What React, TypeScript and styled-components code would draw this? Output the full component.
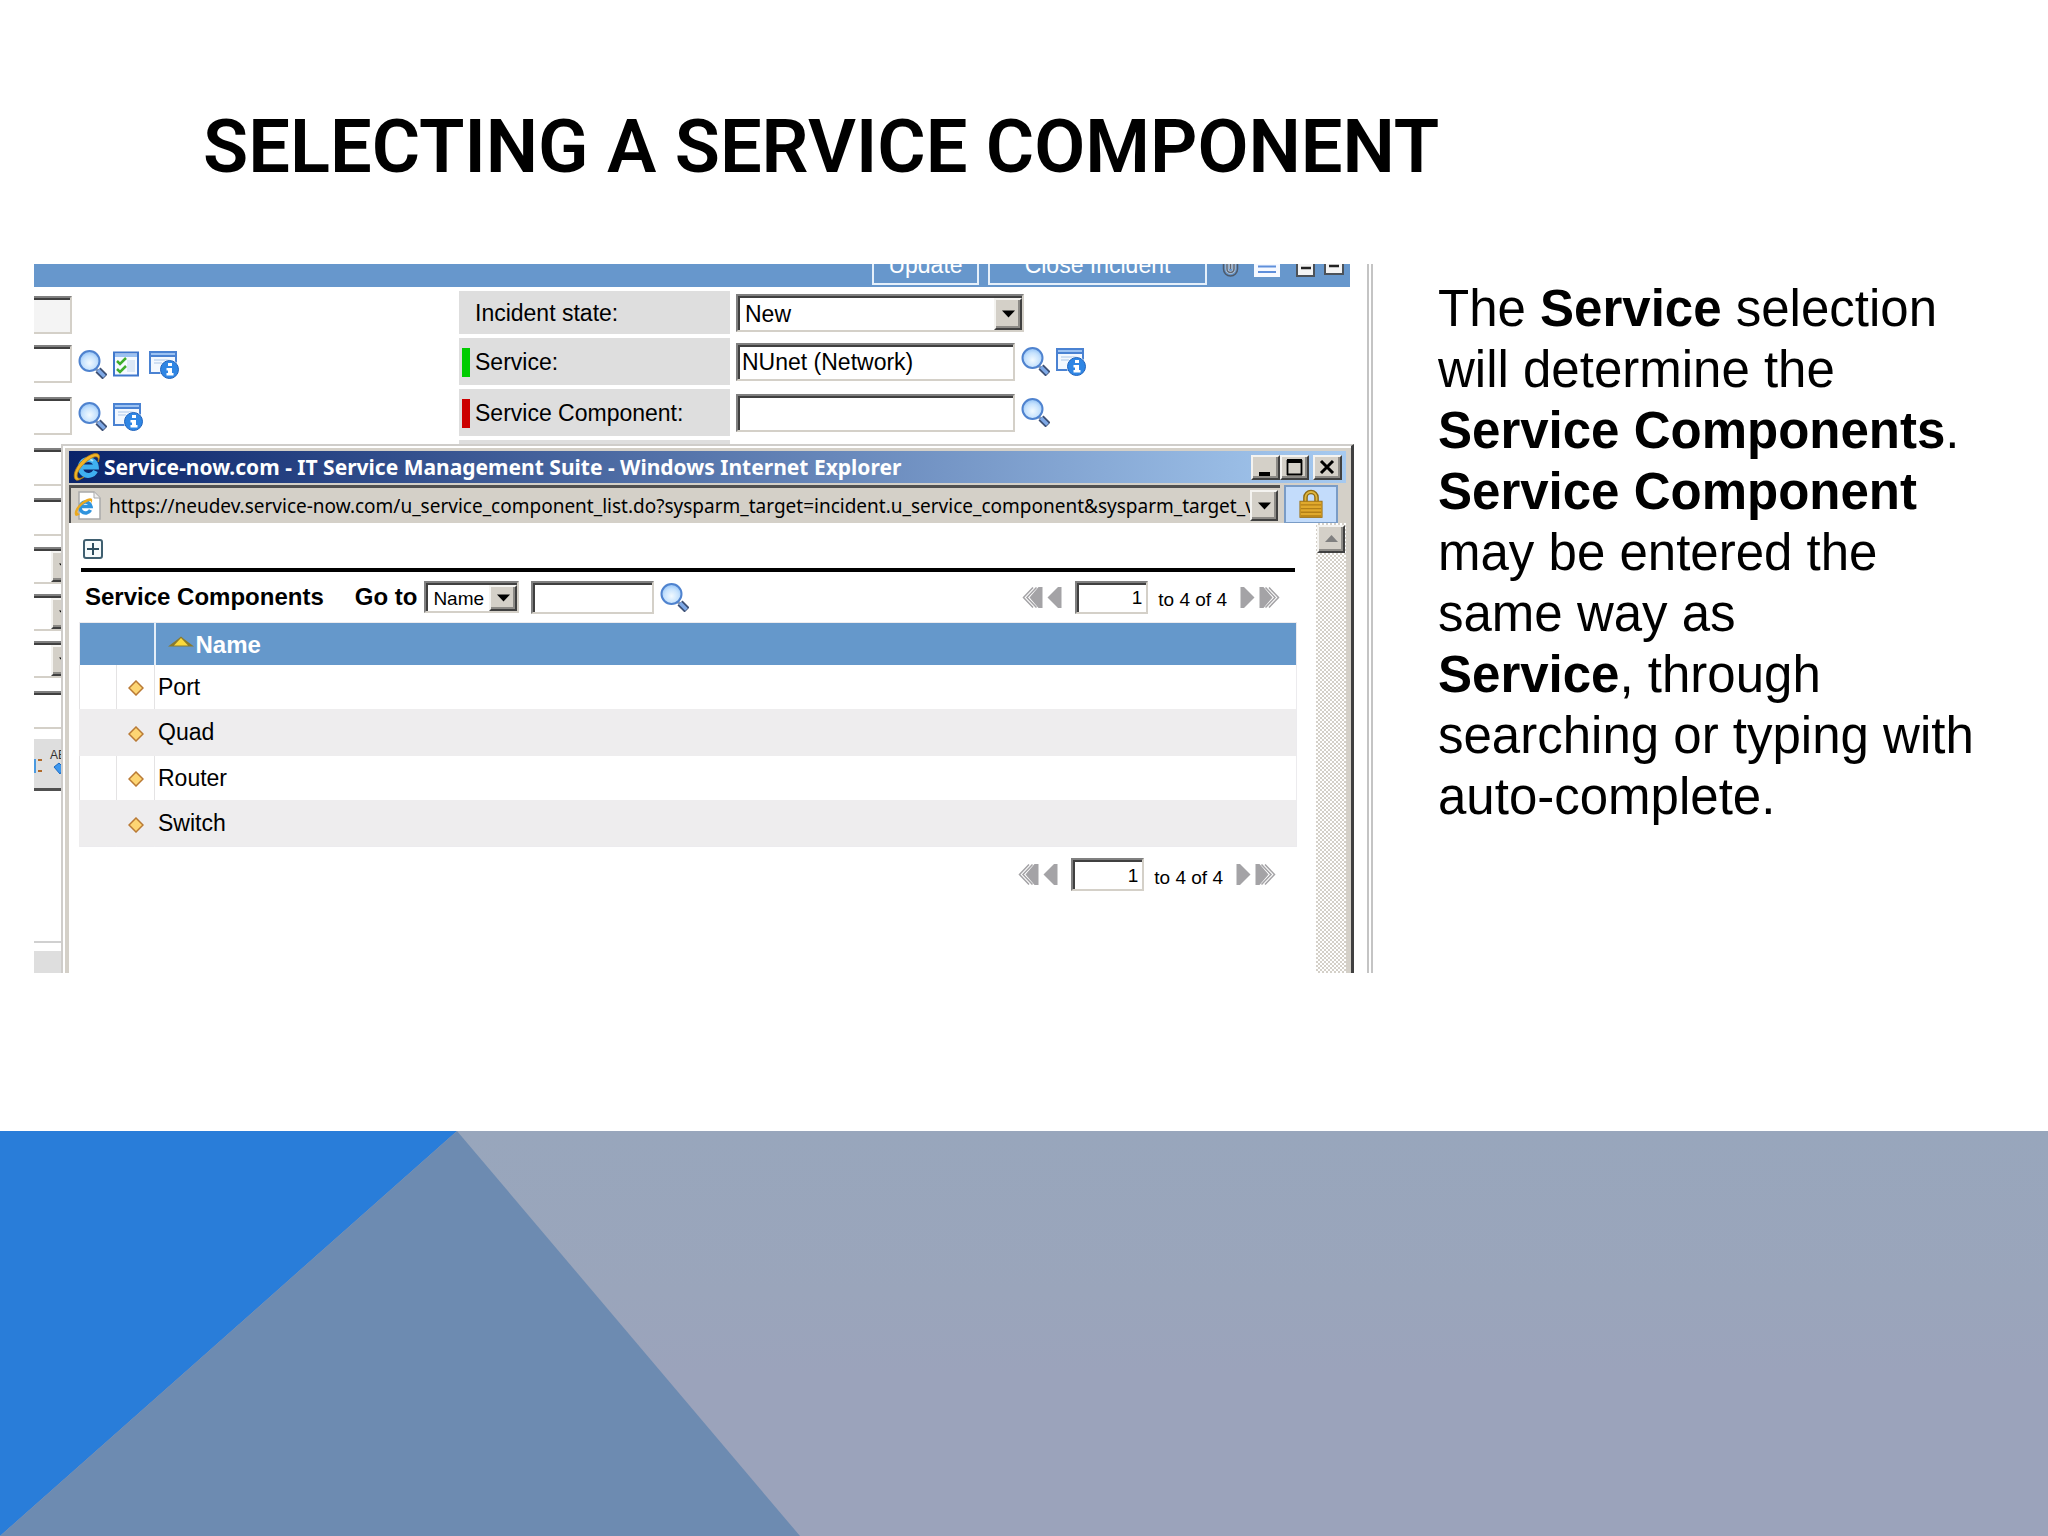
import React from "react";
import styled, { createGlobalStyle, css } from "styled-components";

const sans = '"Liberation Sans", Arial, Helvetica, sans-serif';
const ui = '"Noto Sans", Tahoma, sans-serif';

const GlobalStyle = createGlobalStyle`
  *, *::before, *::after { box-sizing: border-box; }
  body { margin: 0; background: #ffffff; color: #000000; font-family: ${sans}; }
  button, input, select { font: inherit; color: inherit; margin: 0; }
`;

const inset = css`
  border: 2px solid;
  border-color: #808080 #d4d0c8 #d4d0c8 #808080;
  box-shadow: inset 2px 2px #404040;
  background: #ffffff;
`;

const bevel = css`
  border: 2px solid;
  border-color: #f4f3f0 #404040 #404040 #f4f3f0;
  box-shadow: inset -2px -2px #8c8a86;
  background: #d4d0c8;
`;

const Slide = styled.main`
  min-height: 100vh;
  display: flex;
  flex-direction: column;
`;

const Title = styled.h1`
  margin: 0;
  padding: 101px 40px 71px 203px;
  font: 600 74px/92px Roboto, sans-serif;
  text-transform: uppercase;
`;

const Content = styled.div`
  display: grid;
  grid-template-columns: minmax(0, 1339fr) minmax(0, 610fr);
  gap: 65px;
  padding-left: 34px;
`;

const Description = styled.p`
  margin: 0;
  padding: 14px 65px 0 0;
  font-size: 51px;
  line-height: 61px;
`;

const Artwork = styled.svg`
  display: block;
  width: 100%;
  height: 405px;
  margin-top: auto;
`;

/* ---------- incident form behind the pop-up ---------- */

const Shot = styled.section`
  position: relative;
  overflow: hidden;
  border-right: 6px double #c4c4c4;
  font-size: 23px;
`;

const ActionBar = styled.div`
  display: flex;
  justify-content: flex-end;
  align-items: flex-end;
  gap: 9px;
  height: 23px;
  margin-right: 17px;
  padding: 0 6px 2px 0;
  background: #6797cc;
`;

const ActionButton = styled.button<{ $wide?: boolean }>`
  flex: none;
  width: ${(p) => (p.$wide ? 219 : 107)}px;
  height: 42px;
  padding: 2px 0 0;
  border: 2px solid #e6f0fa;
  background: #6797cc;
  color: #ffffff;
  line-height: 36px;
`;

const ActionIcons = styled.div`
  display: flex;
  align-items: flex-end;
  gap: 15px;
  padding: 0 0 8px 6px;
  svg { display: block; }
`;

const Form = styled.div`
  display: grid;
  grid-template-columns: 425px minmax(0, 1fr);
  padding-top: 4px;
`;

const SideColumn = styled.div`
  display: flex;
  flex-direction: column;
  gap: 4px;
`;

const FieldColumn = styled.div`
  display: flex;
  flex-direction: column;
  gap: 4px;
`;

const SideRow = styled.div<{ $h: number }>`
  display: flex;
  align-items: center;
  gap: 6px;
  height: ${(p) => p.$h}px;
  padding-top: 4px;
`;

const SideInput = styled.input<{ $muted?: boolean }>`
  width: 38px;
  height: 38px;
  ${inset}
  border-left: 0;
  box-shadow: inset 0 2px #404040;
  background: ${(p) => (p.$muted ? "#f4f4f4" : "#ffffff")};
`;

const SideNotes = styled.div`
  width: 60px;
  height: 38px;
  margin-top: 8px;
  ${inset}
  border-left: 0;
  box-shadow: inset 0 2px #404040;
`;

const SideTools = styled.div`
  display: flex;
  justify-content: flex-start;
  width: 60px;
  height: 52px;
  margin-top: 6px;
  border-bottom: 3px solid #505050;
  background: #dedede;
`;

const SideArea = styled.div`
  width: 60px;
  height: 148px;
  border-bottom: 2px solid #d0d0d0;
`;

const SideFoot = styled.div`
  width: 60px;
  height: 22px;
  margin-top: 4px;
  background: #dedede;
`;

const FieldRow = styled.div<{ $h: number }>`
  display: grid;
  grid-template-columns: 271px minmax(0, 1fr);
  gap: 6px;
  align-items: center;
  height: ${(p) => p.$h}px;
`;

const FieldLabel = styled.label<{ $flag?: string }>`
  display: flex;
  align-items: center;
  gap: 5px;
  height: 100%;
  padding: 2px 0 0 3px;
  background: #dedede;
  &::before {
    content: "";
    width: 8px;
    height: 29px;
    background: ${(p) => p.$flag || "transparent"};
  }
`;

const FieldControl = styled.div`
  display: flex;
  align-items: center;
  gap: 6px;
`;

const TextField = styled.input<{ $w: number; $h?: number; $size?: number; $right?: boolean }>`
  width: ${(p) => p.$w}px;
  height: ${(p) => p.$h || 38}px;
  padding: 2px 4px 0;
  ${inset}
  font-size: ${(p) => p.$size || 23}px;
  text-align: ${(p) => (p.$right ? "right" : "left")};
`;

const SelectBox = styled.span<{ $w: number; $h: number; $open?: boolean }>`
  display: grid;
  grid-template-columns: minmax(0, 1fr) 28px;
  width: ${(p) => p.$w}px;
  height: ${(p) => p.$h}px;
  ${inset}
  padding: 2px 0 0 2px;
  overflow: hidden;
  ${(p) => p.$open && css`
    border-left: 0;
    box-shadow: inset 0 2px #404040;
  `}
`;

const Select = styled.select<{ $size?: number }>`
  grid-area: 1 / 1 / 2 / 3;
  appearance: none;
  min-width: 0;
  padding: 0 0 0 5px;
  border: 0;
  background: transparent;
  font-size: ${(p) => p.$size || 23}px;
`;

const SelectArrow = styled.span`
  grid-area: 1 / 2;
  display: grid;
  place-items: center;
  pointer-events: none;
  ${bevel}
`;

const IconButton = styled.button`
  display: block;
  flex: none;
  padding: 0;
  border: 0;
  background: none;
  svg { display: block; }
`;

/* ---------- pop-up browser window ---------- */

const Popup = styled.section`
  position: absolute;
  inset: 180px 13px 0 27px;
  display: flex;
  flex-direction: column;
  padding: 5px 5px 0 6px;
  border: solid;
  border-width: 2px 3px 0 2px;
  border-color: #cfcdca #404040 #cfcdca #cfcdca;
  box-shadow: inset 2px 2px #ffffff;
  background: #d4d0c8;
`;

const TitleBar = styled.header`
  display: flex;
  align-items: center;
  height: 32px;
  padding: 0 4px;
  background: linear-gradient(90deg, #0a246a, #a6caf0);
  color: #ffffff;
`;

const WindowTitle = styled.h2`
  flex: 1;
  min-width: 0;
  margin: 0;
  padding-left: 3px;
  overflow: hidden;
  white-space: nowrap;
  font: 700 21px/28px ${ui};
`;

const WindowButton = styled.button<{ $apart?: boolean }>`
  display: grid;
  place-items: center;
  width: 29px;
  height: 25px;
  margin-left: ${(p) => (p.$apart ? 4 : 0)}px;
  padding: 0;
  ${bevel}
`;

const AddressRow = styled.div`
  display: flex;
  align-items: center;
  gap: 4px;
  height: 40px;
  padding-top: 2px;
`;

const AddressBox = styled.div`
  display: flex;
  align-items: center;
  flex: 1;
  min-width: 0;
  height: 38px;
  padding: 2px 2px 2px 3px;
  border-top: 3px solid #505050;
  border-left: 2px solid #505050;
`;

const AddressInput = styled.input`
  flex: 1;
  min-width: 0;
  height: 32px;
  padding: 0 0 0 8px;
  border: 0;
  background: transparent;
  font: 400 19px/30px ${ui};
`;

const DropButton = styled.button`
  display: grid;
  place-items: center;
  width: 28px;
  height: 31px;
  padding: 0;
  ${bevel}
`;

const LockButton = styled.button`
  display: grid;
  place-items: center;
  width: 54px;
  height: 39px;
  margin-right: 8px;
  padding: 0;
  border: 2px solid #7a9cc6;
  background: #c3dcfb;
`;

const Viewport = styled.div`
  display: flex;
  flex: 1;
  min-height: 0;
`;

const Page = styled.div`
  flex: 1;
  min-width: 0;
  padding: 16px 19px 0 10px;
  background: #ffffff;
`;

const PageHead = styled.div`
  margin: 0 2px;
  padding: 0 0 9px 2px;
  border-bottom: 4px solid #000000;
`;

const ListBar = styled.div`
  display: flex;
  align-items: center;
  height: 50px;
  padding: 0 17px 0 6px;
`;

const ListTitle = styled.h3`
  margin: 0 31px 0 0;
  font-size: 24px;
  line-height: 28px;
`;

const GoTo = styled.label`
  margin-right: 7px;
  font-size: 24px;
  font-weight: 700;
  line-height: 28px;
`;

const SearchGroup = styled.div`
  display: flex;
  align-items: center;
  gap: 6px;
  margin-left: 12px;
`;

const Pager = styled.nav`
  display: flex;
  align-items: center;
  gap: 4px;
  margin-left: auto;
  font-size: 19px;
`;

const PagerField = styled.label`
  display: flex;
  align-items: center;
  gap: 10px;
  margin: 0 9px;
  line-height: 24px;
  white-space: nowrap;
`;

const PagerText = styled.span`
  padding-top: 6px;
`;

const ListFoot = styled.div`
  display: flex;
  padding: 11px 21px 0 0;
`;

const Table = styled.table`
  width: 100%;
  border-collapse: collapse;
  table-layout: fixed;
  border: 1px solid #ecebee;
`;

const Column = styled.col<{ $w?: number }>`
  width: ${(p) => (p.$w ? p.$w + "px" : "auto")};
`;

const HeadCell = styled.th`
  height: 42px;
  padding: 0 0 0 12px;
  background: #6598cb;
  color: #ffffff;
  font-size: 24px;
  line-height: 28px;
  text-align: left;
  & + & { border-left: 2px solid #e4eef8; }
`;

const SortLabel = styled.span`
  display: flex;
  align-items: center;
  gap: 2px;
  padding-top: 2px;
  svg { margin-bottom: 6px; }
`;

const BodyRow = styled.tr<{ $shade: boolean }>`
  height: ${(p) => (p.$shade ? 47 : 44)}px;
  background: ${(p) => (p.$shade ? "#eeedee" : "#ffffff")};
  td { border-left: 1px solid ${(p) => (p.$shade ? "#eeedee" : "#e4e3e4")}; }
`;

const Cell = styled.td<{ $center?: boolean }>`
  padding: 0 0 0 ${(p) => (p.$center ? 0 : 3)}px;
  text-align: ${(p) => (p.$center ? "center" : "left")};
  font-size: 23px;
  line-height: 28px;
  svg { display: inline-block; vertical-align: middle; }
`;

const ScrollBar = styled.div`
  width: 30px;
  padding: 2px 1px;
  background: repeating-conic-gradient(#d4d0c8 0 25%, #ffffff 0 50%) 0 0 / 4px 4px;
`;

const ScrollUp = styled.button`
  display: grid;
  place-items: center;
  width: 28px;
  height: 28px;
  padding: 0;
  ${bevel}
`;

/* ---------- icons ---------- */

const Magnifier = () => (
  <svg width="29" height="29" viewBox="0 0 29 29" aria-hidden="true">
    <defs>
      <radialGradient id="glass" cx="50%" cy="60%" r="60%">
        <stop offset="0" stopColor="#f2faff" />
        <stop offset="0.6" stopColor="#c6e2fd" />
        <stop offset="1" stopColor="#8fc0f5" />
      </radialGradient>
    </defs>
    <path d="M17 18 L21 22" stroke="#8a9ab5" strokeWidth="3" />
    <path d="M20 20 L27 27" stroke="#3c4f74" strokeWidth="7" />
    <path d="M20 20 L26.5 26.5" stroke="#7fa9e6" strokeWidth="3.5" />
    <circle cx="11.5" cy="11" r="10" fill="url(#glass)" stroke="#4f83cf" strokeWidth="2" />
  </svg>
);

const InfoWindow = () => (
  <svg width="30" height="29" viewBox="0 0 30 29" aria-hidden="true">
    <rect x="1" y="2" width="26" height="21" fill="#f3f8fe" stroke="#4a82d2" strokeWidth="2" />
    <rect x="1" y="2" width="26" height="4" fill="#9cc2f2" stroke="#4a82d2" strokeWidth="2" />
    <path d="M5 10h16M5 13h8" stroke="#cfdff3" strokeWidth="2" />
    <circle cx="20.5" cy="19.500" r="10" fill="#ffffff" />
    <circle cx="20.500" cy="19.500" r="9" fill="#2f86e4" stroke="#1f63bd" />
    <path d="M19 13h4v3h-4zM17.500 18H23v5h1.500v2.500h-7V23H19v-2.500h-1.500z" fill="#ffffff" />
  </svg>
);

const CheckWindow = () => (
  <svg width="30" height="26" viewBox="0 0 30 26" aria-hidden="true">
    <rect x="1" y="1.500" width="24" height="23" fill="#f6faff" stroke="#3f77cc" strokeWidth="2" />
    <path d="M2 4.500h22" stroke="#9cc2f2" strokeWidth="3" />
    <rect x="14" y="9" width="8" height="12" fill="#dce8f6" />
    <path d="M4 10l3 3 6-6M4 18l3 3 6-6" fill="none" stroke="#3fae2c" strokeWidth="2.500" />
  </svg>
);

const Triangle = ({ up, fill = "#000000" }: { up?: boolean; fill?: string }) => (
  <svg width="13" height="8" viewBox="0 0 13 8" aria-hidden="true">
    <path d={up ? "M6.500 0L13 7H0z" : "M0 0.500H13L6.500 7.500z"} fill={fill} />
  </svg>
);

const Explorer = ({ size }: { size: number }) => (
  <svg width={size} height={size} viewBox="0 0 28 28" aria-hidden="true">
    <path
      d="M22.500 18a8 8 0 1 1 .8-4H9"
      fill="none"
      stroke="#3fb0f0"
      strokeWidth="5"
    />
    <path d="M9 8.500a8 8 0 0 1 11-.5" fill="none" stroke="#a6e2fb" strokeWidth="2" />
    <path
      d="M3 27C-3 22 7 5 20 1c8-2 7 4 5 8 1-4 0-6-4-5C11 8 1 21 5 25c1 1 4 0 6-1-3 2-6 4-8 3z"
      fill="#f0b428"
      stroke="#b97f12"
      strokeWidth="0.800"
    />
  </svg>
);

const PageExplorer = () => (
  <svg width="27" height="29" viewBox="0 0 27 29" aria-hidden="true">
    <path d="M5 1h15l6 6v21H5z" fill="#ffffff" stroke="#a9a9a9" strokeWidth="1.500" />
    <path d="M20 1v6h6" fill="#eeeeee" stroke="#a9a9a9" />
    <path d="M16.500 19a5.500 5.500 0 1 1 .5-3.500H7" fill="none" stroke="#2f93dd" strokeWidth="3.500" />
    <path d="M2 25c-4-3 2-13 11-17 6-2 6 1 4 5 1-3-1-4-4-2C6 14 0 23 6 23c-1 1-3 2-4 2z" fill="#eba91f" />
  </svg>
);

const Lock = () => (
  <svg width="24" height="30" viewBox="0 0 26 31" aria-hidden="true">
    <path d="M7 15V8.500a6 6 0 0 1 12 0V15" fill="none" stroke="#8d6a14" strokeWidth="5" />
    <path d="M7 15V8.500a6 6 0 0 1 12 0V15" fill="none" stroke="#e0b73f" strokeWidth="2" />
    <rect x="1" y="12.500" width="24" height="17.500" fill="#e0a92c" stroke="#9c7013" />
    <path d="M2 16.500h22M2 20.500h22M2 24.500h22M2 28.500h22" stroke="#b27f16" strokeWidth="1.500" />
  </svg>
);

const Rewind = ({ flip, double }: { flip?: boolean; double?: boolean }) => (
  <svg width={double ? 21 : 15} height="21" viewBox={double ? "0 0 21 21" : "0 0 15 21"} aria-hidden="true">
    <g transform={flip ? `translate(${double ? 21 : 15} 0) scale(-1 1)` : undefined}>
      {double ? (
        <>
          <path d="M11 0.500L1.500 10.500l9.500 10M14.500 0.500L5 10.500l9.500 10" fill="none" stroke="#a4a3a6" strokeWidth="1.500" />
          <path d="M20.500 0v21h-4L7.500 10.500L16.500 0z" fill="#a4a3a6" />
        </>
      ) : (
        <path d="M14.500 0v21H11L0.500 10.500L11 0z" fill="#a4a3a6" />
      )}
    </g>
  </svg>
);

const Diamond = () => (
  <svg width="16" height="16" viewBox="0 0 16 16" aria-hidden="true">
    <path d="M8 1L15 8L8 15L1 8z" fill="#fdd573" stroke="#b97a35" strokeWidth="1.500" />
  </svg>
);

const Spelling = () => (
  <svg width="27" height="48" viewBox="0 0 27 48" aria-hidden="true">
    <path d="M0 20h2v14H0z" fill="#4a9ae0" />
    <path d="M4 21h4M4 32h4" stroke="#b06a2a" strokeWidth="2" />
    <text x="16" y="20" fontSize="12" fontFamily="Liberation Sans" fill="#333333">AB</text>
    <path d="M20 28l5-4 5 5-4 6z" fill="#3d97ee" stroke="#1b6cc4" />
  </svg>
);

const Search = () => (
  <IconButton type="button" aria-label="Look up"><Magnifier /></IconButton>
);
const Info = () => (
  <IconButton type="button" aria-label="Details"><InfoWindow /></IconButton>
);

const PageControls = ({ id }: { id: string }) => (
  <Pager aria-label="Pages">
    <IconButton type="button" aria-label="First"><Rewind double /></IconButton>
    <IconButton type="button" aria-label="Previous"><Rewind /></IconButton>
    <PagerField htmlFor={id}>
      <TextField id={id} $w={73} $h={33} $size={19} $right defaultValue="1" />
      <PagerText>to 4 of 4</PagerText>
    </PagerField>
    <IconButton type="button" aria-label="Next"><Rewind flip /></IconButton>
    <IconButton type="button" aria-label="Last"><Rewind flip double /></IconButton>
  </Pager>
);

const components = ["Port", "Quad", "Router", "Switch"];

const BackgroundForm = () => (
  <>
    <ActionBar>
      <ActionButton type="button">Update</ActionButton>
      <ActionButton type="button" $wide>Close Incident</ActionButton>
      <ActionIcons>
        <svg width="17" height="30" viewBox="0 0 17 30" aria-hidden="true">
          <path d="M1.500 4v18a7 7 0 0 0 14 0V6" fill="none" stroke="#4d5a6b" strokeWidth="1.500" />
          <path d="M5 8v14a3.500 3.500 0 0 0 7 0V8M8.500 8v14" fill="none" stroke="#c3ccd8" strokeWidth="3" />
          <path d="M5 8v14a3.500 3.500 0 0 0 7 0V8M8.500 8v14" fill="none" stroke="#5c6675" strokeWidth="1.500" />
        </svg>
        <svg width="26" height="26" viewBox="0 0 26 26" aria-hidden="true">
          <path d="M0 0h26v26H0z" fill="#f6f9ff" />
          <path d="M4 10h18M4 15.500h18M4 21h18" stroke="#5f8fdb" strokeWidth="2" />
        </svg>
        <svg width="49" height="26" viewBox="0 0 49 26" aria-hidden="true">
          <path d="M2 0h17v25H2zM30 0h18v23H30z" fill="#f4f4f4" stroke="#4c5259" strokeWidth="2" />
          <path d="M6 17h10M34 15h10" stroke="#222222" strokeWidth="2.500" />
        </svg>
      </ActionIcons>
    </ActionBar>
    <Form>
      <SideColumn>
        <SideRow $h={43}><SideInput $muted readOnly aria-label="Number" /></SideRow>
        <SideRow $h={48}>
          <SideInput aria-label="Caller" />
          <Search />
          <IconButton type="button" aria-label="Checklist"><CheckWindow /></IconButton>
          <Info />
        </SideRow>
        <SideRow $h={48}><SideInput aria-label="Location" /><Search /><Info /></SideRow>
        <SideRow $h={46}><SideInput aria-label="Phone" /></SideRow>
        <SideRow $h={46}><SideInput aria-label="Email" /></SideRow>
        {["Impact", "Urgency", "Priority"].map((name) => (
          <SideRow $h={43} key={name}>
            <SelectBox $w={47} $h={37} $open>
              <Select aria-label={name} />
              <SelectArrow><Triangle /></SelectArrow>
            </SelectBox>
          </SideRow>
        ))}
        <SideNotes />
        <SideTools><Spelling /></SideTools>
        <SideArea />
        <SideFoot />
      </SideColumn>
      <FieldColumn>
        <FieldRow $h={43}>
          <FieldLabel htmlFor="state">Incident state:</FieldLabel>
          <FieldControl>
            <SelectBox $w={288} $h={38}>
              <Select id="state"><option>New</option></Select>
              <SelectArrow><Triangle /></SelectArrow>
            </SelectBox>
          </FieldControl>
        </FieldRow>
        <FieldRow $h={47}>
          <FieldLabel htmlFor="service" $flag="#00cc00">Service:</FieldLabel>
          <FieldControl>
            <TextField id="service" $w={279} defaultValue="NUnet (Network)" />
            <Search /><Info />
          </FieldControl>
        </FieldRow>
        <FieldRow $h={47}>
          <FieldLabel htmlFor="component" $flag="#cc0000">Service Component:</FieldLabel>
          <FieldControl>
            <TextField id="component" $w={279} />
            <Search />
          </FieldControl>
        </FieldRow>
        <FieldRow $h={47}><FieldLabel as="span" /></FieldRow>
      </FieldColumn>
    </Form>
  </>
);

const LookupWindow = () => (
  <Popup>
    <TitleBar>
      <Explorer size={28} />
      <WindowTitle>Service-now.com - IT Service Management Suite - Windows Internet Explorer</WindowTitle>
      <WindowButton type="button" aria-label="Minimize">
        <svg width="17" height="17" viewBox="0 0 17 17"><path d="M2 13h11v4H2z" /></svg>
      </WindowButton>
      <WindowButton type="button" aria-label="Maximize">
        <svg width="17" height="17" viewBox="0 0 17 17">
          <path d="M1 2h15M1.500 1v15M15.500 1v15M1 15.500h15" stroke="#000000" strokeWidth="1.800" />
          <path d="M1 0h15v4H1z" />
        </svg>
      </WindowButton>
      <WindowButton type="button" aria-label="Close" $apart>
        <svg width="17" height="17" viewBox="0 0 17 17">
          <path d="M2 2l12 12M14 2L2 14" stroke="#000000" strokeWidth="3" />
        </svg>
      </WindowButton>
    </TitleBar>
    <AddressRow>
      <AddressBox>
        <PageExplorer />
        <AddressInput
          aria-label="Address"
          readOnly
          value="https://neudev.service-now.com/u_service_component_list.do?sysparm_target=incident.u_service_component&sysparm_target_value="
        />
        <DropButton type="button" aria-label="Address history"><Triangle /></DropButton>
      </AddressBox>
      <LockButton type="button" aria-label="Security report"><Lock /></LockButton>
    </AddressRow>
    <Viewport>
      <Page>
        <PageHead>
          <IconButton type="button" aria-label="Expand filter">
            <svg width="20" height="20" viewBox="0 0 20 20">
              <rect x="1" y="1" width="18" height="18" rx="2" fill="#f7fbfc" stroke="#3f5f70" strokeWidth="2" />
              <path d="M10 4v12M4 10h12" stroke="#2f4f60" strokeWidth="2" />
            </svg>
          </IconButton>
        </PageHead>
        <ListBar>
          <ListTitle>Service Components</ListTitle>
          <GoTo htmlFor="goto">Go to</GoTo>
          <SelectBox $w={95} $h={32}>
            <Select id="goto" $size={19}><option>Name</option></Select>
            <SelectArrow><Triangle /></SelectArrow>
          </SelectBox>
          <SearchGroup>
            <TextField $w={123} $h={33} $size={19} aria-label="Search text" />
            <Search />
          </SearchGroup>
          <PageControls id="page-top" />
        </ListBar>
        <Table>
          <colgroup>
            <Column $w={37} />
            <Column $w={38} />
            <Column />
          </colgroup>
          <thead>
            <tr>
              <HeadCell colSpan={2} />
              <HeadCell>
                <SortLabel>
                  <svg width="26" height="11" viewBox="0 0 26 11" aria-hidden="true">
                    <path d="M0 10.500L10 3l3-2.500L16 3l10 7.500z" fill="#8a7a2c" />
                    <path d="M6 9.500L13 2l7 7.500z" fill="#fbd93c" />
                  </svg>
                  Name
                </SortLabel>
              </HeadCell>
            </tr>
          </thead>
          <tbody>
            {components.map((name, i) => (
              <BodyRow key={name} $shade={i % 2 === 1}>
                <Cell $center />
                <Cell $center><Diamond /></Cell>
                <Cell>{name}</Cell>
              </BodyRow>
            ))}
          </tbody>
        </Table>
        <ListFoot><PageControls id="page-bottom" /></ListFoot>
      </Page>
      <ScrollBar>
        <ScrollUp type="button" aria-label="Scroll up"><Triangle up fill="#808080" /></ScrollUp>
      </ScrollBar>
    </Viewport>
  </Popup>
);

export default function App() {
  return (
    <>
      <GlobalStyle />
      <Slide>
        <Title>Selecting a Service Component</Title>
        <Content>
          <Shot>
            <BackgroundForm />
            <LookupWindow />
          </Shot>
          <Description>
            The <b>Service</b> selection will determine the <b>Service Components</b>.{" "}
            <b>Service Component</b> may be entered the same way as
            <br />
            <b>Service</b>, through searching or typing with auto-complete.
          </Description>
        </Content>
        <Artwork viewBox="0 0 2048 405" preserveAspectRatio="none" aria-hidden="true">
          <defs>
            <linearGradient id="haze" x1="0" y1="0" x2="0" y2="1">
              <stop offset="0" stopColor="#98a6bc" />
              <stop offset="0.400" stopColor="#9aa5bb" />
              <stop offset="0.600" stopColor="#9ba3bb" />
              <stop offset="1" stopColor="#9ba3bb" />
            </linearGradient>
          </defs>
          <path d="M0 0H2048V405H0z" fill="url(#haze)" />
          <path d="M0 0H457L0 405z" fill="#297dd9" />
          <path d="M457 0L800 405H0z" fill="#6d8bb1" />
        </Artwork>
      </Slide>
    </>
  );
}
